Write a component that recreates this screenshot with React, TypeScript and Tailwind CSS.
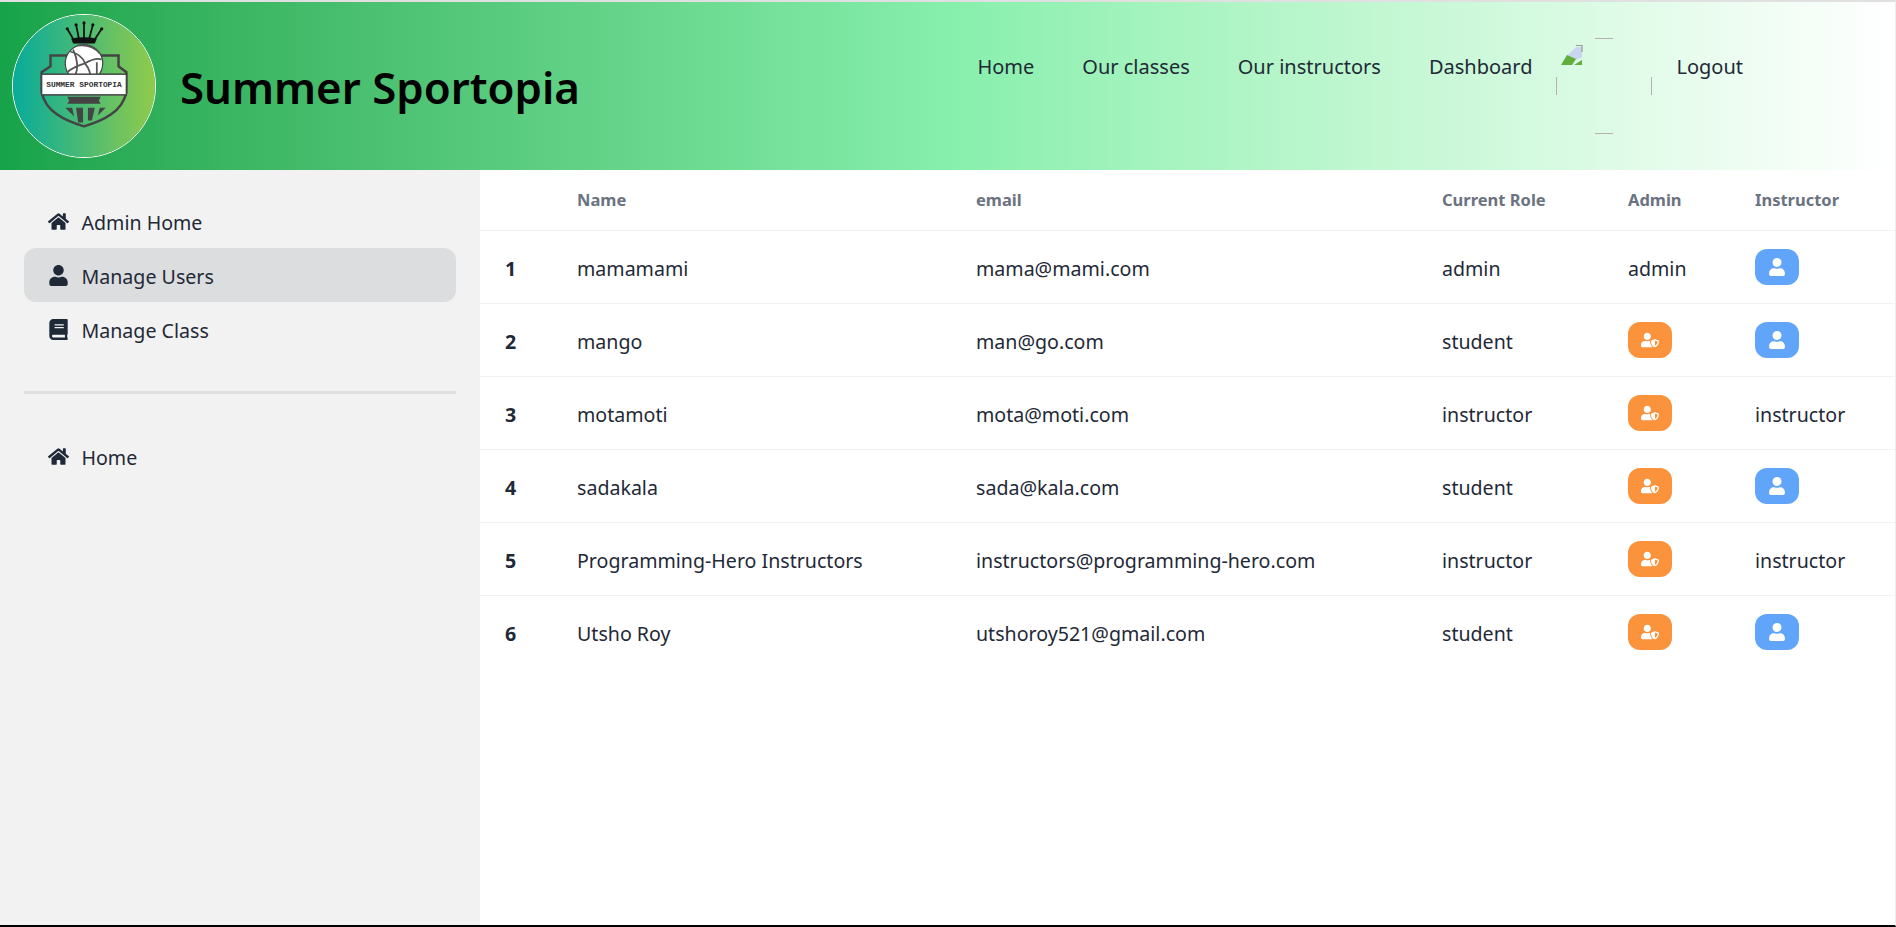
import { FaBook, FaHome, FaUser, FaUserShield } from 'react-icons/fa';

const users = [
  { name: 'mamamami', email: 'mama@mami.com', role: 'admin' },
  { name: 'mango', email: 'man@go.com', role: 'student' },
  { name: 'motamoti', email: 'mota@moti.com', role: 'instructor' },
  { name: 'sadakala', email: 'sada@kala.com', role: 'student' },
  { name: 'Programming-Hero Instructors', email: 'instructors@programming-hero.com', role: 'instructor' },
  { name: 'Utsho Roy', email: 'utshoroy521@gmail.com', role: 'student' },
];

const Logo = () => (
  <svg viewBox="0 0 144 144" className="w-[144px] h-[144px] rounded-full border border-white">
    <defs>
      <linearGradient id="logoBg" x1="0" x2="1" y1="0" y2="0">
        <stop offset="0" stopColor="#07ab9b" />
        <stop offset="1" stopColor="#90cb4b" />
      </linearGradient>
    </defs>
    <rect width="144" height="144" fill="url(#logoBg)" />
    {/* crown */}
    <path d="M62 26 L55 14 M67 25 L64 10 M72 25 V8 M77 25 L81 10 M82 26 L90 14" stroke="#111" strokeWidth="1.8" fill="none" />
    <path d="M59 24 Q72 21 85 24 L83 29 H61 Z" fill="#111" />
    <circle cx="55" cy="14" r="1.6" fill="#111" />
    <circle cx="64" cy="10" r="1.6" fill="#111" />
    <circle cx="72" cy="8" r="1.6" fill="#111" />
    <circle cx="81" cy="10" r="1.6" fill="#111" />
    <circle cx="90" cy="14" r="1.6" fill="#111" />
    {/* shield */}
    <path d="M38 52 V41 H107 V52 L115 58 V78 C111 98 92 107 72 113 C52 107 33 98 29 78 V58 Z" fill="none" stroke="#444" strokeWidth="2.5" />
    {/* ball */}
    <circle cx="72" cy="49" r="19" fill="#fff" stroke="#444" strokeWidth="1.2" />
    <path d="M58 37 Q70 40 73 49 M73 49 Q83 43 90 45 M73 49 Q62 52 55 58 M73 49 Q79 56 79 67 M65 31 Q80 29 88 39 M63 62 Q68 50 61 35 M85 62 V48" stroke="#555" strokeWidth="1.8" fill="none" />
    {/* banner */}
    <rect x="29" y="60" width="86" height="21" fill="#fff" stroke="#444" strokeWidth="1.5" />
    <text x="72" y="73" textAnchor="middle" fontSize="8" fontWeight="700" fontFamily="'Liberation Mono', monospace" fill="#333">SUMMER SPORTOPIA</text>
    <path d="M55 83 H89 L87 87 L89 90 H55 L57 87 Z" fill="#444" />
    <path d="M53 94 H60 L62 103 Z M64 94 H71 V109 H66 Z M76 94 H83 L80 107 H76 Z M88 94 H94 L86 102 Z" fill="#444" />
  </svg>
);

// broken image with only the corners of its rounded outline showing
const Avatar = () => (
  <svg viewBox="0 0 96 96" className="w-[96px] h-[96px] mx-[24px]">
    <path d="M39 0.5 H57 M39 95.5 H57 M0.5 39 V57 M95.5 39 V57" stroke="#bcaeb0" strokeWidth="1" fill="none" />
    <path d="M11 18 L20 9 H26 V19 L20 22 Z" fill="#c9d6f0" />
    <path d="M5 27 L11 17 L20 21 L16 27 Z" fill="#62ae3c" />
    <path d="M18 27 L26 22 V27 Z" fill="#62ae3c" />
    <path d="M20 7.5 H26 V14" stroke="#9a9a9a" strokeWidth="1.2" fill="none" />
  </svg>
);

const SideLink = ({ icon, label, active }: { icon: React.ReactNode; label: string; active?: boolean }) => (
  <a className={`flex items-center gap-[12.5px] h-[54px] px-6 rounded-xl text-[19.6px] text-[#1f2937] ${active ? 'bg-[#dcdddf]' : ''}`}>
    <span className="w-[21px] flex justify-center text-[21px]">{icon}</span>
    <span className="pt-[3px]">{label}</span>
  </a>
);

const App = () => {
  return (
    <div className="h-[927px] flex flex-col bg-white font-['Noto_Sans','Open_Sans',sans-serif] text-[#1f2937] border-t-2 border-t-[#e0e0e0] border-b-2 border-b-black border-r border-r-[#eeeeee] overflow-hidden">
      {/* Navbar */}
      <header className="h-[168px] shrink-0 flex items-start bg-linear-to-r from-[#16a34a] via-[#86efac] to-white">
        <div className="flex items-center pl-[12px] pt-[12px] flex-1">
          <Logo />
          <h1 className="ml-6 pt-[4px] text-[43.8px] font-semibold text-black">Summer Sportopia</h1>
        </div>
        <nav className="flex items-start text-[20px] pr-[152px] mt-[36px]">
          <a className="mr-[48px] mt-[14px]">Home</a>
          <a className="mr-[48px] mt-[14px]">Our classes</a>
          <a className="mr-[48px] mt-[14px]">Our instructors</a>
          <a className="mt-[14px]">Dashboard</a>
          <Avatar />
          <a className="mt-[14px]">Logout</a>
        </nav>
      </header>

      <div className="flex flex-1 min-h-0">
        {/* Sidebar */}
        <aside className="w-[480px] shrink-0 bg-[#f2f2f2] px-6 pt-6">
          <SideLink icon={<FaHome />} label="Admin Home" />
          <SideLink icon={<FaUser />} label="Manage Users" active />
          <SideLink icon={<FaBook />} label="Manage Class" />
          <div className="h-[3px] bg-[#dfdfdf] mt-[35px] mb-[35px]" />
          <SideLink icon={<FaHome />} label="Home" />
        </aside>

        {/* Users table */}
        <main className="flex-1 min-w-0">
          <table className="w-full table-fixed text-left text-[19.6px]">
            <colgroup>
              <col className="w-[81px]" />
              <col className="w-[399px]" />
              <col className="w-[466px]" />
              <col className="w-[186px]" />
              <col className="w-[127px]" />
              <col />
            </colgroup>
            <thead>
              <tr className="h-[60px] border-b border-[#f2f2f2] text-[16.5px] text-[#6b7280]">
                <th />
                <th className="px-4 pt-[2px] font-bold">Name</th>
                <th className="px-4 pt-[2px] font-bold">email</th>
                <th className="px-4 pt-[2px] font-bold">Current Role</th>
                <th className="px-4 pt-[2px] font-bold">Admin</th>
                <th className="px-4 pt-[2px] font-bold">Instructor</th>
              </tr>
            </thead>
            <tbody>
              {users.map((user, index) => (
                <tr key={user.email} className="h-[73px] border-b border-[#f2f2f2] last:border-b-0">
                  <th className="pl-[25px] pt-[4px] font-bold">{index + 1}</th>
                  <td className="px-4 pt-[4px]">{user.name}</td>
                  <td className="px-4 pt-[4px]">{user.email}</td>
                  <td className="px-4 pt-[4px]">{user.role}</td>
                  <td className={`px-4 ${user.role === 'admin' ? 'pt-[4px]' : ''}`}>
                    {user.role === 'admin' ? 'admin' : (
                      <button className="w-[44px] h-[36px] flex items-center justify-center rounded-xl bg-[#fb923c] text-white text-[18px]">
                        <FaUserShield />
                      </button>
                    )}
                  </td>
                  <td className={`px-4 ${user.role === 'instructor' ? 'pt-[4px]' : ''}`}>
                    {user.role === 'instructor' ? 'instructor' : (
                      <button className="w-[44px] h-[36px] flex items-center justify-center rounded-xl bg-[#60a5fa] text-white text-[18px]">
                        <FaUser />
                      </button>
                    )}
                  </td>
                </tr>
              ))}
            </tbody>
          </table>
        </main>
      </div>
    </div>
  );
};

export default App;
